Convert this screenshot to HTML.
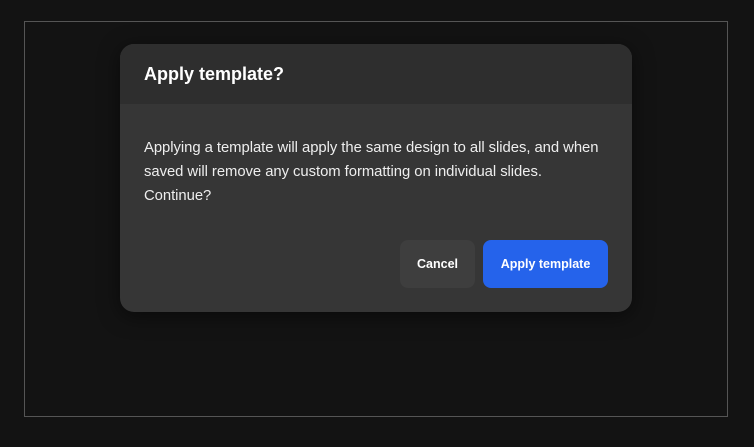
<!DOCTYPE html>
<html><head><style>
body{margin:0;width:754px;height:447px;background:#131313;overflow:hidden;font-family:"Liberation Sans",sans-serif;position:relative}
.frame{position:absolute;left:24px;top:21px;width:702px;height:394px;border:1px solid #555}
.dlg{position:absolute;left:120px;top:44px;width:512px;height:268px;border-radius:14px;background:#363636;overflow:hidden;box-shadow:0 4px 20px rgba(0,0,0,.5)}
.hd{height:60px;background:#2e2e2e;color:#fff;font-weight:bold;font-size:18px;line-height:60px;padding-left:24px}
.bd{position:absolute;left:24px;top:92px;width:490px;color:#eee;font-size:14.85px;line-height:24px;letter-spacing:-0.05px;white-space:nowrap}
.btn{position:absolute;top:196px;height:48px;border-radius:8px;color:#fff;font-weight:bold;font-size:12.5px;line-height:48px;text-align:center}
</style></head><body>
<div class="frame"></div>
<div class="dlg">
<div class="hd">Apply template?</div>
<div class="bd">Applying a template will apply the same design to all slides, and when<br>saved will remove any custom formatting on individual slides.<br>Continue?</div>
<div class="btn" style="left:280px;width:75px;background:#3e3e3e">Cancel</div>
<div class="btn" style="left:363px;width:125px;background:#2563eb">Apply template</div>
</div>
</body></html>
